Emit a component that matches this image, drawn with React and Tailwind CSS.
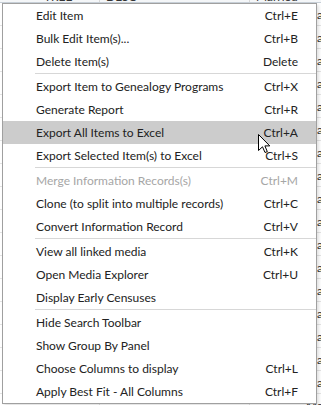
import React from 'react'

const groups = [
  [
    { label: 'Edit Item', key: 'Ctrl+E' },
    { label: 'Bulk Edit Item(s)...', key: 'Ctrl+B' },
    { label: 'Delete Item(s)', key: 'Delete' },
  ],
  [
    { label: 'Export Item to Genealogy Programs', key: 'Ctrl+X' },
    { label: 'Generate Report', key: 'Ctrl+R' },
    { label: 'Export All Items to Excel', key: 'Ctrl+A', hover: true },
    { label: 'Export Selected Item(s) to Excel', key: 'Ctrl+S' },
  ],
  [
    { label: 'Merge Information Records(s)', key: 'Ctrl+M', disabled: true },
    { label: 'Clone (to split into multiple records)', key: 'Ctrl+C' },
    { label: 'Convert Information Record', key: 'Ctrl+V' },
  ],
  [
    { label: 'View all linked media', key: 'Ctrl+K' },
    { label: 'Open Media Explorer', key: 'Ctrl+U' },
    { label: 'Display Early Censuses', key: '' },
  ],
  [
    { label: 'Hide Search Toolbar', key: '' },
    { label: 'Show Group By Panel', key: '' },
    { label: 'Choose Columns to display', key: 'Ctrl+L' },
    { label: 'Apply Best Fit - All Columns', key: 'Ctrl+F' },
  ],
]

// grid rows peeking out behind the menu
const rows = Array.from({ length: 19 })

function MenuItem({ item }) {
  return (
    <div
      className={`flex h-[23px] items-center pl-[33px] pr-[18px] ${
        item.hover ? 'bg-[#cccccc]' : ''
      } ${item.disabled ? 'text-[#a6a6a6]' : 'text-[#222222]'}`}
    >
      <span className="flex-1 whitespace-nowrap">{item.label}</span>
      <span className="whitespace-nowrap">{item.key}</span>
    </div>
  )
}

function Cursor() {
  return (
    <svg className="absolute left-[258px] top-[134px]" width="13" height="20" viewBox="0 0 13 20">
      <path
        d="M0.5 0.5 L0.5 16.5 L4.5 12.8 L7 18.5 L9.3 17.6 L6.9 11.9 L11.8 11.9 Z"
        fill="#fff"
        stroke="#000"
        strokeWidth="1"
        strokeLinejoin="miter"
      />
    </svg>
  )
}

export default function App() {
  return (
    <div className="relative h-[405px] w-[321px] overflow-hidden bg-white font-['Lato','Noto_Sans',sans-serif] text-[12px]">
      {/* background data grid */}
      <div className="mt-[-9px] flex flex-col text-[#333]">
        <div className="grid h-[12px] grid-cols-[100px_150px_71px] overflow-hidden border-b border-[#c8d0d8] bg-[#f4f6f8] leading-[12px]">
          <div className="border-r border-[#d8d8d8] pl-[44px]">TREE</div>
          <div className="border-r border-[#d8d8d8] pl-[6px]">DESC</div>
          <div className="pl-[6px]">Married</div>
        </div>
        {rows.map((_, i) => (
          <div key={i} className="grid h-[23px] grid-cols-[100px_150px_71px] border-b border-[#e4e4e4]">
            <div className="border-r border-[#e4e4e4]" />
            <div className="border-r border-[#e4e4e4]" />
            <div className="overflow-hidden whitespace-nowrap pl-[56px] pt-[3px]">Married</div>
          </div>
        ))}
      </div>

      {/* context menu */}
      <div className="absolute left-[2px] top-[3px] w-[315px] border border-[#a0a0a0] bg-white shadow-[2px_2px_3px_rgba(0,0,0,0.12)]">
        {groups.map((g, gi) => (
          <div key={gi}>
            {gi > 0 && <div className="mb-px ml-[32px] h-px bg-[#d7d7d7]" />}
            {g.map((item) => (
              <MenuItem key={item.label} item={item} />
            ))}
          </div>
        ))}
      </div>

      <Cursor />
    </div>
  )
}
